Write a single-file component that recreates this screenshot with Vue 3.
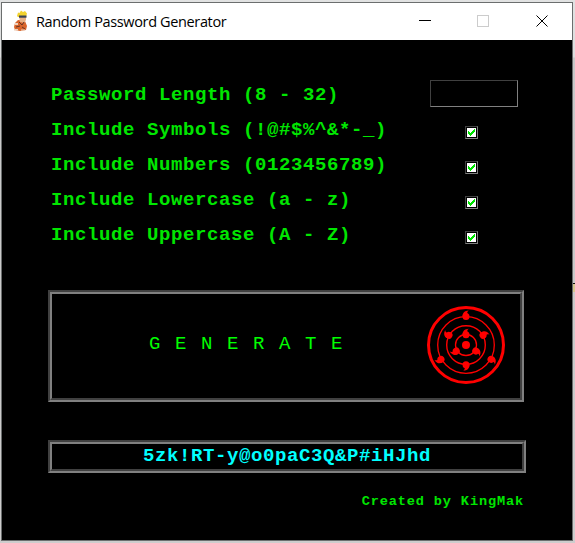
<script setup>
import { ref } from 'vue'

const options = ref([
  { label: 'Include Symbols (!@#$%^&*-_)', on: true },
  { label: 'Include Numbers (0123456789)', on: true },
  { label: 'Include Lowercase (a - z)', on: true },
  { label: 'Include Uppercase (A - Z)', on: true },
])
const password = ref('5zk!RT-y@o0paC3Q&P#iHJhd')

const tomoe = [
  [39, 10.500, 0], [14, 53.3, 240], [64, 53.3, 120],
  [22, 29.3, 300], [56, 29.3, 60], [39, 58.7, 180],
  [39, 28.7, 0], [29.3, 45, 240], [48.7, 45, 120],
]
</script>

<template>
  <div class="desktop">
    <main class="window">
      <header class="titlebar">
        <svg class="app-icon" viewBox="0 0 20 24">
          <path d="M7 11 4 14 3 18 4 21 9 22 15 21 16 17 14 12Z" fill="#d9652b" />
          <path d="M8 7h7v4l-2 3-4-1z" fill="#e9b184" />
          <path d="M6 7 7 3.500 8.500 4 10 1.500 12 3 14 2 16 4.500 15 8 7 8Z" fill="#f2d22e" />
          <path d="M8 6.500h7.500v2.200H8z" fill="#394252" />
          <path d="m8 13 3 3 2-3M5 18l4-1M11 18l3 2" fill="none" stroke="#673526" stroke-width="1" />
          <path d="M4 14h3v2H4zM3 20h4v1.500H3zM10 20.500h4v1h-4z" fill="#eed2bd" />
        </svg>
        <h1>Random Password Generator</h1>
        <svg class="controls" viewBox="0 0 150 37" shape-rendering="crispEdges">
          <path d="M-3 17.5H9" stroke="#000" />
          <rect x="55.5" y="12.5" width="11" height="11" fill="none" stroke="#ccc" />
          <path d="m114.500 12.500 11 11m0-11-11 11" stroke="#000" shape-rendering="auto" />
        </svg>
      </header>
      <section class="content">
        <div class="row">
          <span class="label">Password Length (8 - 32)</span>
          <span class="cell"><input class="entry" type="text" /></span>
        </div>
        <div v-for="o in options" :key="o.label" class="row">
          <span class="label">{{ o.label }}</span>
          <span class="cell">
            <button class="check" @click="o.on = !o.on">
              <svg v-if="o.on" viewBox="0 0 9 9" shape-rendering="crispEdges">
                <path d="M1 3h1v1h1v1h1v-1h1v-1h1v-1h1v-1h1v3h-1v1h-1v1h-1v1h-1v1h-1v-1h-1v-1h-1z" fill="#00e600" />
              </svg>
            </button>
          </span>
        </div>
        <button class="generate groove">
          <span class="caption">G E N E R A T E</span>
          <svg class="emblem" viewBox="0 0 78 78">
            <g fill="none" stroke="#f00">
              <circle cx="39" cy="39" r="37.500" stroke-width="3" />
              <circle cx="39" cy="39" r="28.300" stroke-width="1.300" />
              <circle cx="39" cy="39" r="19.300" stroke-width="1.400" />
              <circle cx="39" cy="39" r="10.500" stroke-width="1.300" />
            </g>
            <circle cx="39" cy="39" r="4" fill="#f00" />
            <g v-for="(t, i) in tomoe" :key="i" :transform="`translate(${t[0]} ${t[1]}) rotate(${t[2]})`" fill="#f00">
              <circle r="3.500" />
              <path d="M-3.500 0C-3.600-3.500-1.500-5.700 2.800-6C1.200-5 1-3.800 1.500-2.500Z" />
            </g>
          </svg>
        </button>
        <div class="result groove">{{ password }}</div>
        <footer class="credit">Created by KingMak</footer>
      </section>
    </main>
    <aside class="behind"></aside>
  </div>
</template>

<style>
body { margin: 0; overflow: hidden; }
</style>
<style scoped>
* { box-sizing: border-box; }
.desktop {
  width: 575px; height: 543px; padding: 2px 0 0 1px; display: flex;
  background: linear-gradient(#e1e2e2 0, #dcdddd 57px, #c8c8c8 58px, #cdcdcd 100%);
}
.window { width: 572px; height: 539px; border: 1px solid #6b6e6e; background: #000; }
.behind { width: 2px; height: 9px; margin-top: 281px; border-top: 1px solid #111; background: #d6c891; }
.titlebar { height: 37px; display: flex; background: #fff; }
.app-icon { width: 20px; height: 24px; margin: 6px 0 0 9px; flex: none; }
h1 {
  margin: 0 0 0 5px; width: 269px; flex: none; white-space: nowrap;
  font: 400 14.5px/37px "Open Sans", "Noto Sans", sans-serif; letter-spacing: -0.36px; color: #000;
}
.controls { width: 150px; height: 37px; margin-left: 117px; flex: none; overflow: visible; }
.content {
  height: 500px; padding: 37px 46px 0; display: flex; flex-direction: column;
  font-family: "Liberation Mono", monospace; color: #00e600;
}
.row { height: 35px; flex: none; display: flex; padding-left: 3px; }
.label { width: 370px; flex: none; font-size: 19px; font-weight: 700; letter-spacing: 0.6px; line-height: 36px; white-space: pre; }
.cell { width: 106px; flex: none; display: flex; justify-content: center; align-items: flex-start; }
.entry {
  width: 88px; height: 27px; margin-top: 3px; padding: 2px; background: #000; color: #00e600;
  border: 1px solid; border-color: #404040 #808080 #808080 #404040; border-radius: 0; outline: 0;
}
.cell:has(.check) { padding-right: 5px; }
.check {
  width: 13px; height: 13px; margin-top: 14px; padding: 0; display: flex; background: #fff;
  border: 1px solid; border-color: #404040 #808080 #808080 #404040; border-radius: 0;
  box-shadow: inset 0 0 0 1px #000;
}
.check svg { width: 9px; height: 9px; margin: 1px; flex: none; }
.groove {
  border: 2px solid; border-color: #404040 #808080 #808080 #404040; border-radius: 0; background: #000;
  position: relative;
}
.groove::before {
  content: ""; position: absolute; inset: 0;
  border: 2px solid; border-color: #808080 #404040 #404040 #808080;
}
.generate {
  width: 476px; height: 112px; margin-top: 38px; padding: 0 17px 0 99px; flex: none;
  display: flex; align-items: center; justify-content: space-between; font-family: inherit;
}
.caption { font-size: 19px; letter-spacing: 1.6px; color: #0f0; white-space: pre; padding-bottom: 4px; }
.emblem { width: 78px; height: 78px; margin-bottom: 2px; }
.result {
  width: 478px; height: 33px; margin-top: 38px; flex: none; text-align: center;
  font-size: 19px; font-weight: 700; letter-spacing: 0.6px; line-height: 29px; color: #0ff;
}
.credit {
  width: 476px; margin-top: 20px; text-align: right; font-size: 13.6px; font-weight: 700;
  letter-spacing: 0.86px; line-height: 18px;
}
</style>
